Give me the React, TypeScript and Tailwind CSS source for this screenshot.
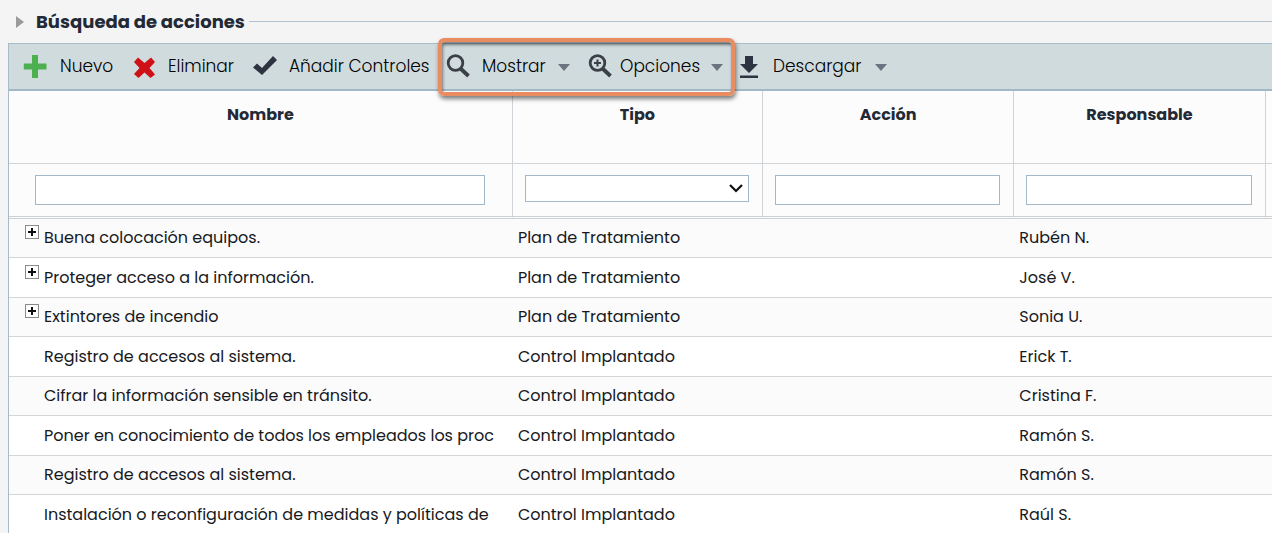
import type { ReactNode } from "react";

type Row = { nombre: string; tipo: string; responsable: string; expandable?: boolean };

const rows: Row[] = [
  { nombre: "Buena colocación equipos.", tipo: "Plan de Tratamiento", responsable: "Rubén N.", expandable: true },
  { nombre: "Proteger acceso a la información.", tipo: "Plan de Tratamiento", responsable: "José V.", expandable: true },
  { nombre: "Extintores de incendio", tipo: "Plan de Tratamiento", responsable: "Sonia U.", expandable: true },
  { nombre: "Registro de accesos al sistema.", tipo: "Control Implantado", responsable: "Erick T." },
  { nombre: "Cifrar la información sensible en tránsito.", tipo: "Control Implantado", responsable: "Cristina F." },
  { nombre: "Poner en conocimiento de todos los empleados los proc", tipo: "Control Implantado", responsable: "Ramón S." },
  { nombre: "Registro de accesos al sistema.", tipo: "Control Implantado", responsable: "Ramón S." },
  { nombre: "Instalación o reconfiguración de medidas y políticas de", tipo: "Control Implantado", responsable: "Raúl S." },
];

function PlusIcon() {
  return (
    <svg viewBox="0 0 24 24" className="size-6 shrink-0" aria-hidden="true">
      <path d="M9 1h6v8.500h8.500v6H15V24H9v-8.500H.8v-6H9z" fill="#4caf50" />
    </svg>
  );
}

function CrossIcon() {
  return (
    <svg viewBox="0 0 24 24" className="mt-1 size-6 shrink-0" aria-hidden="true">
      <path d="M5 1.500l6.500 5.500L18 1.500l4 4.500-5.500 6 5.500 6.500-4.500 3.500-6-5.500-6 5.500L1 18l5.500-6L1 6z" fill="#cf1016" />
    </svg>
  );
}

function CheckIcon() {
  return (
    <svg viewBox="0 0 24 24" className="size-6 shrink-0" aria-hidden="true">
      <path d="M0 13.500L4 9.500l5 4.500L20 2l4 4L9 21z" fill="#2d3340" />
    </svg>
  );
}

function SearchIcon({ plus = false }: { plus?: boolean }) {
  return (
    <svg viewBox="0 0 24 24" className="size-6 shrink-0" fill="none" stroke="#3b4048" aria-hidden="true">
      <circle cx="9.500" cy="9" r="7.300" strokeWidth="2.800" />
      <path d="M14.500 14.500l8 7.500" strokeWidth="3.800" />
      {plus && <path d="M9.500 5.500v7M6 9h7" strokeWidth="2" />}
    </svg>
  );
}

function DownloadIcon() {
  return (
    <svg viewBox="0 0 20 24" className="h-6 w-5 shrink-0" fill="#2d3340" aria-hidden="true">
      <path d="M6 2h8v8h5l-9 9-9-9h5zM1 21.500h18V24H1z" />
    </svg>
  );
}

function Caret() {
  return (
    <svg viewBox="0 0 12 7" className="mt-1 h-[7px] w-3 shrink-0" aria-hidden="true">
      <path d="M0 0h12L6 7z" fill="#6b7280" />
    </svg>
  );
}

function ToolButton({ icon, menu, className, children }: { icon: ReactNode; menu?: boolean; className: string; children: ReactNode }) {
  return (
    <button type="button" aria-haspopup={menu ? "menu" : undefined} className={`flex items-center whitespace-nowrap text-left ${className}`}>
      {icon}
      <span className="flex-1">{children}</span>
      {menu && <Caret />}
    </button>
  );
}

function ExpandButton({ label }: { label: string }) {
  return (
    <button type="button" aria-label={`Expandir ${label}`} className="mb-3 size-[14px] shrink-0 border border-[#8a8a8a] bg-white">
      <svg viewBox="0 0 12 12" className="size-3" aria-hidden="true">
        <path d="M6 2v8M2 6h8" stroke="#111" strokeWidth="2" />
      </svg>
    </button>
  );
}

const headCell = "h-[73px] border-r border-b border-[#d0d4d8] pt-3 align-top font-bold text-[#232a36]";
const filterCell = "h-[55px] border-r border-b-[3px] border-r-[#d0d4d8] border-b-[#ccd1d5] pl-3 pr-[13px] pt-[11px] align-top [border-bottom-style:double]";
const field = "block w-full border border-[#a3b8c8] bg-white px-2 outline-none";

export default function App() {
  return (
    <main className="overflow-hidden bg-[#f4f4f5] pl-2 font-['Poppins','Inter',sans-serif] text-base leading-6 text-[#17191c]">
      <div className="flex h-[43px] items-center">
        <h1 className="flex items-center pl-2 text-lg font-bold text-[#232a36]">
          <button type="button" aria-label="Mostrar búsqueda" className="mr-3 w-2">
            <svg viewBox="0 0 8 12" className="h-3 w-2" aria-hidden="true">
              <path d="M0 0l8 6-8 6z" fill="#9a9a9a" />
            </svg>
          </button>
          Búsqueda de acciones
        </h1>
        <span className="ml-1 flex-1 border-t border-[#b3c1cc]" />
      </div>

      <section className="border-l border-[#a6bccb]">
        <div className="flex h-12 items-center border-t border-b-2 border-t-[#a6bccb] border-b-[#a3b8c6] bg-[#d0dbdd] pb-0.5 pl-3.5 text-[17px] font-light text-black">
          <ToolButton icon={<PlusIcon />} className="w-[110px] gap-[13px]">Nuevo</ToolButton>
          <ToolButton icon={<CrossIcon />} className="w-[120px] gap-[11px]">Eliminar</ToolButton>
          <ToolButton icon={<CheckIcon />} className="w-[193px] gap-3">Añadir Controles</ToolButton>
          <div className="relative flex">
            <ToolButton menu icon={<SearchIcon />} className="w-[142px] gap-3 pr-[18px]">Mostrar</ToolButton>
            <ToolButton menu icon={<SearchIcon plus />} className="w-[151px] gap-2 pr-4">Opciones</ToolButton>
            <span className="pointer-events-none absolute -top-4 right-1 -bottom-[18px] -left-2 rounded-md border-4 border-[#e98c62] shadow-[1px_3px_4px_rgba(0,0,0,0.5),inset_1px_3px_3px_rgba(0,0,0,0.45)]" />
          </div>
          <ToolButton menu icon={<DownloadIcon />} className="w-36 gap-3.5">Descargar</ToolButton>
        </div>

        <table className="w-full table-fixed border-separate border-spacing-0 bg-white">
          <colgroup>
            <col className="w-[39.9%]" />
            <col className="w-[19.8%]" />
            <col className="w-[19.9%]" />
            <col className="w-[19.9%]" />
            <col />
          </colgroup>
          <thead className="bg-[#fcfcfd]">
            <tr>
              <th scope="col" className={headCell}>Nombre</th>
              <th scope="col" className={headCell}>Tipo</th>
              <th scope="col" className={headCell}>Acción</th>
              <th scope="col" className={headCell}>Responsable</th>
              <td className="border-b border-[#d0d4d8]" />
            </tr>
            <tr>
              <td className={filterCell}>
                <div className="px-3.5">
                  <input type="text" aria-label="Filtrar por nombre" className={`${field} h-[30px]`} />
                </div>
              </td>
              <td className={filterCell}>
                <div className="relative">
                  <select aria-label="Filtrar por tipo" defaultValue="" className={`${field} h-[27px] appearance-none`}>
                    <option value=""></option>
                    <option value="plan">Plan de Tratamiento</option>
                    <option value="control">Control Implantado</option>
                  </select>
                  <svg viewBox="0 0 14 9" className="pointer-events-none absolute top-[9px] right-1.5 h-[9px] w-3.5" aria-hidden="true">
                    <path d="M1 1l6 6 6-6" fill="none" stroke="#111" strokeWidth="2.200" />
                  </svg>
                </div>
              </td>
              <td className={filterCell}>
                <input type="text" aria-label="Filtrar por acción" className={`${field} h-[30px]`} />
              </td>
              <td className={filterCell}>
                <input type="text" aria-label="Filtrar por responsable" className={`${field} h-[30px]`} />
              </td>
              <td className="border-b-[3px] border-double border-[#ccd1d5]" />
            </tr>
          </thead>
          <tbody>
            {rows.map((row, i) => (
              <tr key={i} className="h-[39px] odd:bg-[#fbfbfc] even:h-10 [&>td]:border-b [&>td]:border-[#d3d6d9]">
                <td>
                  <div className="mr-[7px] flex items-center gap-[5px] overflow-hidden pl-4 whitespace-nowrap">
                    {row.expandable ? <ExpandButton label={row.nombre} /> : <span className="w-3.5 shrink-0" />}
                    {row.nombre}
                  </div>
                </td>
                <td className="pl-[5px]">{row.tipo}</td>
                <td />
                <td className="pl-[5px]">{row.responsable}</td>
                <td />
              </tr>
            ))}
          </tbody>
        </table>
      </section>
    </main>
  );
}
